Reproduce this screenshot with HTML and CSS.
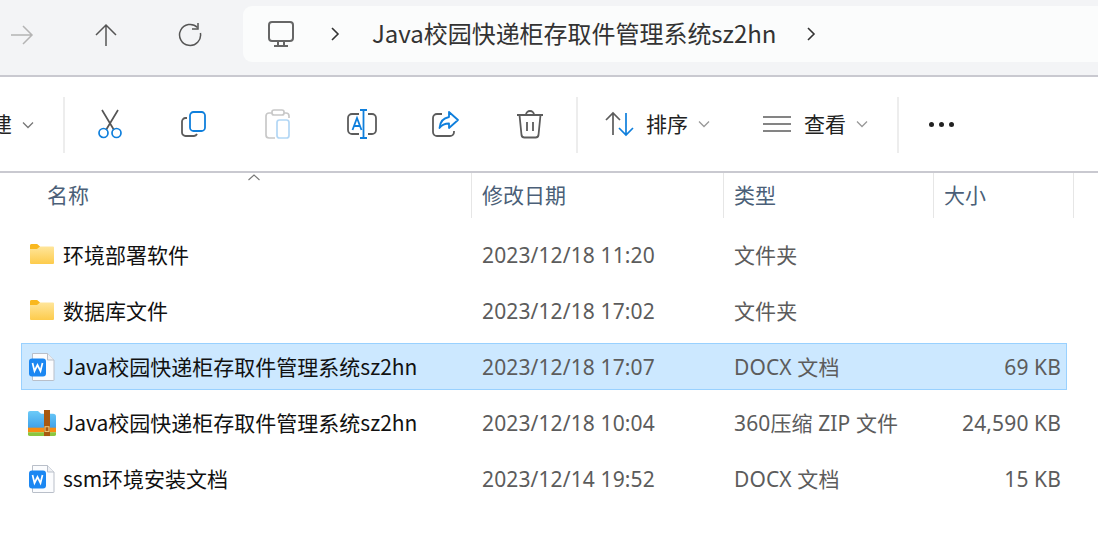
FILE: index.html

```html
<!DOCTYPE html>
<html lang="zh-CN">
<head>
  <meta charset="UTF-8" />
  <title>Java校园快递柜存取件管理系统sz2hn</title>
  <link rel="stylesheet" href="styles.css">
</head>
<body>

  <div class="nav">
    <div class="nav-btn nav-first">
      <svg width="24" height="24" viewBox="0 0 24 24" fill="none" stroke="#b4b4b4" stroke-width="1.5"><path d="M1 12H22M13 3l9 9-9 9"/></svg>
    </div>
    <div class="nav-btn">
      <svg width="24" height="24" viewBox="0 0 24 24" fill="none" stroke="#555" stroke-width="1.5"><path d="M12 23V2M2 12L12 2l10 10"/></svg>
    </div>
    <div class="nav-btn">
      <svg width="24" height="24" viewBox="0 0 24 24" fill="none" stroke="#555" stroke-width="1.5"><path d="M19.5 4.500A10.500 10.500 0 1 0 22.400 10"/><path d="M20 0v6h-6"/></svg>
    </div>
    <div class="crumbs">
      <svg class="pc" width="28" height="28" viewBox="0 0 28 28" fill="none" stroke="#666" stroke-width="2"><rect x="2" y="2" width="24" height="19" rx="3"/><path d="M11 21v4M17 21v4M7 26h14"/></svg>
      <svg class="crumb-arrow" width="10" height="14" viewBox="0 0 10 14" fill="none" stroke="#333" stroke-width="1.6"><path d="M2 1l6 6-6 6"/></svg>
      <span class="crumb-text">Java校园快递柜存取件管理系统sz2hn</span>
      <svg class="crumb-arrow" width="10" height="14" viewBox="0 0 10 14" fill="none" stroke="#333" stroke-width="1.6"><path d="M2 1l6 6-6 6"/></svg>
    </div>
  </div>

  <div class="toolbar">
    <span class="tool-label new-label">新建</span>
    <svg class="chev new-chev" width="12" height="8" viewBox="0 0 12 8" fill="none" stroke="#777" stroke-width="1.3"><path d="M1 1.5l5 5 5-5"/></svg>
    <div class="sep"></div>

    <div class="tool">
      <svg width="26" height="30" viewBox="0 0 26 30" fill="none" stroke-width="1.7"><path d="M5 1l12 20M21 1L9 21" stroke="#555"/><circle cx="6.5" cy="24" r="4.5" stroke="#0f7fdc"/><circle cx="19.5" cy="24" r="4.5" stroke="#0f7fdc"/></svg>
    </div>
    <div class="tool">
      <svg width="26" height="28" viewBox="0 0 26 28" fill="none" stroke-width="1.8"><path d="M6 8H4.500A3.500 3.500 0 0 0 1 11.500V22.500A3.500 3.500 0 0 0 4.500 26H13a3.500 3.500 0 0 0 3-2" stroke="#5c5c5c"/><rect x="9" y="2" width="15" height="19" rx="3.500" stroke="#0f7fdc"/></svg>
    </div>
    <div class="tool">
      <svg width="26" height="30" viewBox="0 0 26 30" fill="none" stroke-width="1.7"><path d="M7 4H4a3 3 0 0 0-3 3v19a3 3 0 0 0 3 3h6M19 4h2a3 3 0 0 1 3 3v2" stroke="#c8c8c8"/><rect x="7" y="1" width="12" height="5" rx="2" stroke="#c8c8c8"/><rect x="12" y="11" width="12" height="18" rx="2.500" stroke="#b3d7f5"/></svg>
    </div>
    <div class="tool">
      <svg width="30" height="30" viewBox="0 0 30 30" fill="none" stroke-width="1.8"><path d="M12 5H5a4 4 0 0 0-4 4v12a4 4 0 0 0 4 4h7M21 5h4a4 4 0 0 1 4 4v12a4 4 0 0 1-4 4h-4" stroke="#5c5c5c"/><path d="M13 1h7M13 29h7M16.500 1v28M5.500 21l4.500-12 4.500 12M7 17h6" stroke="#0f7fdc"/></svg>
    </div>
    <div class="tool">
      <svg width="28" height="28" viewBox="0 0 28 28" fill="none" stroke-width="1.8"><path d="M10 4H5a4 4 0 0 0-4 4v14a4 4 0 0 0 4 4h13a4 4 0 0 0 4-4v-1" stroke="#5c5c5c"/><path d="M17 2l9 8-9 8v-4.500c-4 0-7 1-9.500 4.500 .5-6 4-10 9.500-11z" stroke="#0f7fdc" stroke-linejoin="round"/></svg>
    </div>
    <div class="tool">
      <svg width="28" height="30" viewBox="0 0 28 30" fill="none" stroke="#5c5c5c" stroke-width="1.8"><path d="M1 6h26M3.500 6l2 20a3 3 0 0 0 3 2.500h11a3 3 0 0 0 3-2.500l2-20M10 6a4 4 0 0 1 8 0M11 13v9M17 13v9"/></svg>
    </div>
    <div class="sep"></div>

    <div class="menu sort-menu">
      <svg width="30" height="26" viewBox="0 0 30 26" fill="none" stroke-width="1.7"><path d="M8 24V2M1 9l7-7 7 7" stroke="#5c5c5c"/><path d="M21 2v22M14 17l7 7 7-7" stroke="#0f7fdc"/></svg>
      <span class="tool-label">排序</span>
      <svg class="chev" width="12" height="8" viewBox="0 0 12 8" fill="none" stroke="#999" stroke-width="1.3"><path d="M1 1.500l5 5 5-5"/></svg>
    </div>
    <div class="menu view-menu">
      <svg width="30" height="18" viewBox="0 0 30 18" fill="none" stroke="#5c5c5c" stroke-width="1.700"><path d="M1 2h28M1 9h28M1 16h28"/></svg>
      <span class="tool-label">查看</span>
      <svg class="chev" width="12" height="8" viewBox="0 0 12 8" fill="none" stroke="#999" stroke-width="1.3"><path d="M1 1.500l5 5 5-5"/></svg>
    </div>
    <div class="sep"></div>
    <div class="dots"><i></i><i></i><i></i></div>
  </div>

  <div class="head">
    <div class="col-name">名称
      <svg class="sort-caret" width="14" height="7" viewBox="0 0 14 7" fill="none" stroke="#777" stroke-width="1.1"><path d="M1.500 6L7 1l5.500 5"/></svg>
    </div>
    <div class="col-date">修改日期</div>
    <div class="col-type">类型</div>
    <div class="col-size">大小</div>
  </div>

  <div class="list">
    <div class="row">
      <div class="name">
        <svg class="ico" width="28" height="28" viewBox="0 0 28 28"><use href="#folder"/></svg>
        <span>环境部署软件</span>
      </div>
      <div class="meta">2023/12/18 11:20</div>
      <div class="meta">文件夹</div>
      <div class="meta size"></div>
    </div>
    <div class="row">
      <div class="name">
        <svg class="ico" width="28" height="28" viewBox="0 0 28 28"><use href="#folder"/></svg>
        <span>数据库文件</span>
      </div>
      <div class="meta">2023/12/18 17:02</div>
      <div class="meta">文件夹</div>
      <div class="meta size"></div>
    </div>
    <div class="row selected">
      <div class="name">
        <svg class="ico" width="28" height="28" viewBox="0 0 28 28"><use href="#doc"/></svg>
        <span>Java校园快递柜存取件管理系统sz2hn</span>
      </div>
      <div class="meta">2023/12/18 17:07</div>
      <div class="meta">DOCX 文档</div>
      <div class="meta size">69 KB</div>
    </div>
    <div class="row">
      <div class="name">
        <svg class="ico" width="28" height="28" viewBox="0 0 28 28"><use href="#zip"/></svg>
        <span>Java校园快递柜存取件管理系统sz2hn</span>
      </div>
      <div class="meta">2023/12/18 10:04</div>
      <div class="meta">360压缩 ZIP 文件</div>
      <div class="meta size">24,590 KB</div>
    </div>
    <div class="row">
      <div class="name">
        <svg class="ico" width="28" height="28" viewBox="0 0 28 28"><use href="#doc"/></svg>
        <span>ssm环境安装文档</span>
      </div>
      <div class="meta">2023/12/14 19:52</div>
      <div class="meta">DOCX 文档</div>
      <div class="meta size">15 KB</div>
    </div>
  </div>

  <!-- shared file icons -->
  <svg class="defs" width="0" height="0">
    <defs>
      <linearGradient id="fold" x1="0" y1="0" x2="0" y2="1"><stop offset="0" stop-color="#ffe9a6"/><stop offset="1" stop-color="#fdcb4c"/></linearGradient>
      <linearGradient id="zipblue" x1="0" y1="0" x2="0" y2="1"><stop offset="0" stop-color="#6ccbf8"/><stop offset="1" stop-color="#3f9fe8"/></linearGradient>
      <g id="folder" transform="translate(1 -3)">
        <path d="M2 6.500a1.500 1.500 0 0 1 1.500-1.500H9l3 2.500h13a1 1 0 0 1 1 1V24a1 1 0 0 1-1 1H3a1 1 0 0 1-1-1z" fill="url(#fold)"/>
        <path d="M2 6.500a1.500 1.500 0 0 1 1.500-1.500H9l3 2.500-3 2.500H2z" fill="#f9b81f"/>
      </g>
      <g id="doc" transform="translate(0 -1)">
        <path d="M5.500 .5H20.500L27 7V27a.5 .5 0 0 1-.5 .5H6a.5 .5 0 0 1-.5-.5z" fill="#fbfcfe" stroke="#b9bfc9"/>
        <path d="M20.500 .5V7H27" fill="#eef0f4" stroke="#b9bfc9"/>
        <rect x="2" y="5.500" width="17" height="18" rx="3" fill="#1b87f2"/>
        <path d="M5.500 10l2 8 3-6 3 6 2-8" fill="none" stroke="#fff" stroke-width="1.700"/>
      </g>
      <g id="zip" transform="translate(1 0) scale(1 .93)">
        <path d="M0 3a2 2 0 0 1 2-2h8l3 3h12a3 3 0 0 1 3 3v13H0z" fill="url(#zipblue)"/>
        <rect x="0" y="19" width="28" height="5" fill="#f88c12"/>
        <path d="M0 24h28v2a2 2 0 0 1-2 2H2a2 2 0 0 1-2-2z" fill="#8cc63f"/>
        <rect x="16" y="0" width="6" height="28" fill="#a9590f"/>
        <rect x="17" y="18" width="4" height="5" fill="none" stroke="#f6d68a"/>
      </g>
    </defs>
  </svg>

</body>
</html>
```

FILE: styles.css

```css
html, body { margin: 0; height: 100%; overflow: hidden; }
body { width: 1098px; height: 537px; background: #fff; color: #111; font-family: "Noto Sans CJK SC", "Liberation Sans", sans-serif; font-size: 21px; position: relative; }

.nav { height: 75px; background: #f3f4f6; border-bottom: 2px solid #c9c9d0; display: flex; }
.nav-btn { width: 84px; height: 69px; display: flex; align-items: center; justify-content: center; }
.nav-first { width: 64px; justify-content: flex-start; padding-left: 10px; box-sizing: border-box; }
.crumbs { margin: 6px 0 0 11px; flex: 1; height: 56px; background: #fbfcfc; border-radius: 9px 0 0 9px; display: flex; align-items: center; color: #333; }
.pc { margin-left: 24px; }
.crumb-arrow { margin-left: 35px; }
.crumb-text { margin-left: 32px; font-size: 24px; line-height: 56px; margin-top: -2px; letter-spacing: -.03px; }
.crumb-text + .crumb-arrow { margin-left: 30px; }

.toolbar { height: 94px; display: flex; align-items: center; border-bottom: 2px solid #c9c9d0; overflow: hidden; }
.sep { width: 2px; height: 56px; background: #ededed; flex: none; margin-top: 1px; }
.tool { width: 84px; height: 56px; flex: none; display: flex; align-items: center; justify-content: center; }
.sep + .tool { margin-left: 3px; }
.tool + .sep { margin-left: 4px; }
.tool-label { color: #222; font-size: 21px; white-space: nowrap; margin-bottom: 2px; }
.new-label { margin-left: -30px; width: 42px; flex: none; }
.new-chev { margin: 2px 29px 0 10px; flex: none; }
.chev { flex: none; }

.menu { display: flex; align-items: center; flex: none; height: 56px; }
.sort-menu { margin-left: 27px; width: 145px; }
.sort-menu .tool-label { margin-left: 11px; }
.sort-menu .chev { margin-left: 10px; }
.view-menu { margin-left: 12px; width: 135px; }
.view-menu .tool-label { margin-left: 12px; }
.view-menu .chev { margin-left: 10px; }
.dots { display: flex; gap: 5px; margin-left: 30px; }
.dots i { width: 5px; height: 5px; border-radius: 50%; background: #222; }

.head { height: 45px; display: grid; grid-template-columns: 472px 252px 210px 140px; color: #4b5f78; font-size: 21px; line-height: 42px; }
.head div { border-right: 1px solid #e6e6e6; box-sizing: border-box; padding-left: 10px; position: relative; }
.head .col-name { padding-left: 47px; }
.sort-caret { position: absolute; left: 247px; top: 1px; }

.list { padding: 13px 0 0 21px; display: flex; flex-direction: column; gap: 9px; }
.row { width: 1046px; height: 47px; box-sizing: border-box; display: grid; grid-template-columns: 450px 252px 210px 134px; align-items: center; border: 1px solid transparent; line-height: 44px; }
.row.selected { background: #cce8ff; border-color: #99d1ff; }
.name { display: flex; align-items: center; margin-left: -1px; white-space: nowrap; }
.ico { margin-left: 6px; flex: none; overflow: visible; }
.name span { margin: 0 0 4px 8px; color: #111; }
.meta { color: #5c5c5c; white-space: nowrap; padding: 0 0 2px 10px; font-family: "Noto Sans", "Noto Sans CJK SC", sans-serif; letter-spacing: .12px; }
.size { text-align: right; padding: 0 7px 2px 0; }
.defs { position: absolute; }
```
